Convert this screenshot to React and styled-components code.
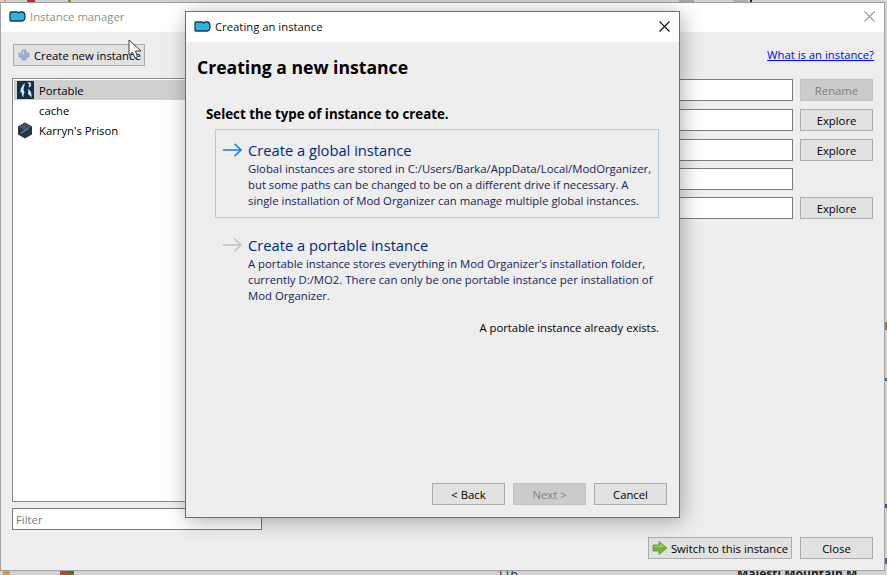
import React from 'react'
import styled, { createGlobalStyle } from 'styled-components'

const uiFont = `"Open Sans", "Noto Sans", "Liberation Sans", sans-serif`

const GlobalStyle = createGlobalStyle`
    html, body {
        margin: 0;
        padding: 0;
        background: #d2d2d2;
    }
    body {
        font-family: ${uiFont};
        font-size: 11.3px;
        color: #000;
    }
`

const LogoIcon = () => (
    <svg width="17" height="11" viewBox="0 0 17 11">
        <path d="M1 2 q0-1 1-1 h6 l1.500 1 l1.500-1 h2 q3 0 3 4.500 t-3 4.500 H2 q-1 0-1-1 Z" fill="#2db2e8" stroke="#17384c" strokeWidth="1.300" />
    </svg>
)

const PlusIcon = () => (
    <svg width="12" height="12" viewBox="0 0 12 12">
        <path d="M4 1 h4 v3 h3 v4 h-3 v3 h-4 v-3 h-3 v-4 h3 Z" fill="#93b3d3" stroke="#7f9dbd" strokeWidth="0.700" />
        <path d="M5 2 h1 v3 h-3 v1 h-1 v-1.500 h3 Z" fill="#c8dced" />
    </svg>
)

const SkyrimIcon = () => (
    <svg width="17" height="18" viewBox="0 0 17 18">
        <rect width="17" height="18" fill="#12304e" />
        <path d="M8 2 q-5 4 -4.500 10 q1 -1 1.500 -0.500 q-1 2.500 1.500 5 q-0.500 -3 1 -5 l-1 -3 Z" fill="#dfe8ef" />
        <path d="M10 2 q2 -1.500 4 0 q0.500 3 -1.500 4.500 l-1 -1 l1 -2.500 Z" fill="#dfe8ef" />
        <path d="M11 8 q4 2 3.500 8.500 q-1.500 -2.500 -3.500 -3.500 q0.500 -2.500 0 -5 Z" fill="#dfe8ef" />
    </svg>
)

const PrisonIcon = () => (
    <svg width="16" height="17" viewBox="0 0 16 17">
        <path d="M8 0.500 L15 4.500 V12.500 L8 16.500 L1 12.500 V4.500 Z" fill="#2b3540" />
        <path d="M8 0.500 L15 4.500 L8 8.500 L1 4.500 Z" fill="#48535f" />
        <path d="M4 11 L11.500 6.500" stroke="#3d8fe0" strokeWidth="1.300" />
    </svg>
)

const SwitchIcon = () => (
    <svg width="16" height="14" viewBox="0 0 16 14">
        <path d="M1 4 h6 v-3.500 l8 6.500 l-8 6.500 v-3.500 h-6 Z" fill="#77b13c" stroke="#5d9a2c" strokeWidth="0.800" />
        <path d="M2 5 h6 v-2.500 l4 3.500 h-10 Z" fill="#a5d26b" />
    </svg>
)

const LinkArrow = ({ color }) => (
    <svg width="19" height="14" viewBox="0 0 19 14" fill="none" stroke={color} strokeWidth="1.600">
        <path d="M0 7 H18" />
        <path d="M11.500 0.800 L18 7 L11.500 13.200" />
    </svg>
)

const CloseGlyph = ({ color }) => (
    <svg width="11" height="11" viewBox="0 0 11 11" fill="none" stroke={color} strokeWidth="1.100">
        <path d="M0.500 0.500 L10.500 10.500 M10.500 0.500 L0.500 10.500" />
    </svg>
)

const Pointer = () => (
    <svg width="15" height="20" viewBox="0 0 15 20">
        <path d="M1 1 V16 L4.500 13 L7 19 L9.500 18 L7.500 12 H13 Z" fill="#fff" stroke="#2a2a2a" strokeWidth="0.900" />
    </svg>
)

const Screen = styled.div`
    position: relative;
    width: 887px;
    height: 575px;
    overflow: hidden;
    background: #d2d2d2;
`

/* the app behind the windows only shows through at the screen edges */
const Speck = styled.i`
    position: absolute;
    left: ${p => p.$x}px;
    top: ${p => p.$y}px;
    width: ${p => p.$w}px;
    height: ${p => p.$h}px;
    background: ${p => p.$c};
`

const PeekText = styled.span`
    position: absolute;
    left: ${p => p.$x}px;
    top: 567px;
    font-size: 12px;
    line-height: 14px;
    font-weight: ${p => (p.$bold ? 700 : 400)};
    white-space: nowrap;
    color: #222;
`

const Manager = styled.div`
    position: absolute;
    left: 0;
    top: 2px;
    width: 885px;
    height: 569px;
    box-sizing: border-box;
    display: flex;
    flex-direction: column;
    background: #eee;
    border: 1px solid #a3a3a3;
    border-top-color: #9c9c9c;
`

const TitleBar = styled.div`
    flex: none;
    box-sizing: border-box;
    height: ${p => p.$height}px;
    display: flex;
    align-items: center;
    gap: 4px;
    padding: 0 9px ${p => p.$lift}px 8px;
    background: #fff;
`

const TitleText = styled.span`
    flex: 1;
    color: ${p => (p.$dim ? '#8f8f8f' : '#111')};
`

const ManagerBody = styled.div`
    flex: 1;
    display: flex;
    flex-direction: column;
    min-height: 0;
    padding: 12px 11px 11px;
`

const Columns = styled.div`
    flex: 1;
    display: flex;
    gap: 20px;
    min-height: 0;
`

const LeftColumn = styled.div`
    flex: none;
    width: 250px;
    display: flex;
    flex-direction: column;
`

const RightColumn = styled.div`
    flex: 1;
    display: flex;
    flex-direction: column;
`

const Button = styled.button`
    flex: none;
    box-sizing: border-box;
    display: inline-flex;
    align-items: center;
    justify-content: center;
    gap: 3px;
    width: ${p => p.$width}px;
    height: 22px;
    padding: 0;
    font-family: ${uiFont};
    font-size: 11.3px;
    white-space: nowrap;
    color: ${p => (p.disabled ? '#808080' : '#000')};
    background: ${p => (p.disabled ? '#cbcbcb' : '#e1e1e1')};
    border: 1px solid ${p => (p.disabled ? '#c2c2c2' : '#adadad')};
`

const CreateButton = styled(Button)`
    justify-content: flex-start;
    margin-left: 1px;
    padding-left: 4px;
    gap: 4px;
`

const InstanceList = styled.ul`
    flex: 1;
    margin: 12px 0 6px;
    padding: 1px;
    list-style: none;
    background: #fff;
    border: 1px solid #828790;
`

const InstanceRow = styled.li`
    height: 20px;
    display: flex;
    align-items: center;
    background: ${p => (p.$selected ? '#d0d0d0' : 'transparent')};
`

const RowIcon = styled.span`
    flex: none;
    box-sizing: border-box;
    width: 25px;
    padding-left: 3px;
    display: flex;
`

const Field = styled.input`
    flex: 1;
    min-width: 0;
    box-sizing: border-box;
    height: 22px;
    padding: 0 3px;
    font-family: ${uiFont};
    font-size: 11.3px;
    background: #fff;
    border: 1px solid #7a7a7a;
    border-radius: 0;
    outline: none;
    &::placeholder {
        color: #7d7d7d;
    }
`

const FilterField = styled(Field)`
    flex: none;
    width: 100%;
`

const HelpLink = styled.a`
    align-self: flex-end;
    height: 22px;
    line-height: 22px;
    margin: 0 -1px 13px 0;
    color: #0000ff;
    text-decoration: underline;
`

const FormRow = styled.div`
    display: flex;
    gap: 7px;
    margin-bottom: ${p => p.$gap}px;
`

const ButtonGap = styled.div`
    flex: none;
    width: 73px;
`

const Footer = styled.div`
    flex: none;
    display: flex;
    justify-content: flex-end;
    gap: ${p => p.$gap}px;
    margin-top: ${p => p.$top}px;
`

const Dialog = styled.div`
    position: absolute;
    left: 185px;
    top: 11px;
    width: 495px;
    height: 507px;
    box-sizing: border-box;
    display: flex;
    flex-direction: column;
    background: #eee;
    border: 1px solid #6e6e6e;
    box-shadow: 2px 3px 20px rgba(0, 0, 0, 0.32);
`

const DialogBody = styled.div`
    flex: 1;
    display: flex;
    flex-direction: column;
    min-height: 0;
    padding: 12px 12px 12px 11px;
`

const Heading = styled.h1`
    margin: 0;
    font-size: 17.600px;
    line-height: 26px;
    font-weight: 700;
`

const SubHeading = styled.h2`
    margin: 25px 0 6px 9px;
    font-size: 13.300px;
    line-height: 18px;
    font-weight: 700;
`

const CommandLink = styled.div`
    box-sizing: border-box;
    margin: ${p => p.$top}px 8px 0 18px;
    height: ${p => p.$height}px;
    padding: ${p => p.$pad}px 8px 0 7px;
    display: grid;
    grid-template-columns: 25px 1fr;
    grid-template-rows: 22px auto;
    border: 1px solid ${p => (p.$active ? '#a9cde8' : 'transparent')};
`

const ArrowSlot = styled.span`
    display: flex;
    align-items: center;
    height: 22px;
`

const CommandTitle = styled.div`
    font-size: 14.700px;
    line-height: 22px;
    color: #002a7f;
`

const CommandText = styled.div`
    grid-column: 2;
    font-size: 11.330px;
    line-height: 16px;
    color: #14245a;
    white-space: nowrap;
`

const Notice = styled.div`
    margin: 7px 8px 0 0;
    text-align: right;
    line-height: 16px;
`

const Spacer = styled.div`
    flex: 1;
`

const PointerSlot = styled.div`
    position: absolute;
    left: 128px;
    top: 39px;
    line-height: 0;
`

const App = () => (
    <Screen>
        <GlobalStyle />

        <Speck $x={4} $y={0} $w={2} $h={2} $c="#e8a23c" />
        <Speck $x={27} $y={0} $w={8} $h={2} $c="#c2244c" />
        <Speck $x={68} $y={0} $w={3} $h={2} $c="#7a9a20" />
        <Speck $x={679} $y={0} $w={15} $h={2} $c="#a8a8a8" />
        <Speck $x={733} $y={0} $w={15} $h={2} $c="#b0b0b0" />
        <Speck $x={750} $y={0} $w={2} $h={2} $c="#222" />
        <Speck $x={3} $y={571} $w={7} $h={4} $c="#e09a30" />
        <Speck $x={60} $y={571} $w={14} $h={4} $c="#b8442a" />
        <Speck $x={68} $y={571} $w={5} $h={3} $c="#2c7a1c" />
        <Speck $x={885} $y={322} $w={2} $h={8} $c="#a87838" />
        <Speck $x={885} $y={378} $w={2} $h={3} $c="#2a6ea8" />
        <Speck $x={885} $y={504} $w={2} $h={4} $c="#34506a" />
        <Speck $x={885} $y={558} $w={2} $h={6} $c="#2a6ea8" />
        <PeekText $x={497}>116</PeekText>
        <PeekText $x={737} $bold>Majesti Mountain M</PeekText>

        <Manager>
            <TitleBar $height={29} $lift={2}>
                <LogoIcon />
                <TitleText $dim>Instance manager</TitleText>
                <CloseGlyph color="#9a9a9a" />
            </TitleBar>
            <ManagerBody>
                <Columns>
                    <LeftColumn>
                        <CreateButton $width={132}>
                            <PlusIcon />
                            Create new instance
                        </CreateButton>
                        <InstanceList>
                            <InstanceRow $selected>
                                <RowIcon><SkyrimIcon /></RowIcon>
                                Portable
                            </InstanceRow>
                            <InstanceRow>
                                <RowIcon />
                                cache
                            </InstanceRow>
                            <InstanceRow>
                                <RowIcon><PrisonIcon /></RowIcon>
                                Karryn's Prison
                            </InstanceRow>
                        </InstanceList>
                        <FilterField placeholder="Filter" />
                    </LeftColumn>
                    <RightColumn>
                        <HelpLink>What is an instance?</HelpLink>
                        <FormRow $gap={8}>
                            <Field readOnly />
                            <Button $width={73} disabled>Rename</Button>
                        </FormRow>
                        <FormRow $gap={8}>
                            <Field readOnly />
                            <Button $width={73}>Explore</Button>
                        </FormRow>
                        <FormRow $gap={7}>
                            <Field readOnly />
                            <Button $width={73}>Explore</Button>
                        </FormRow>
                        <FormRow $gap={7}>
                            <Field readOnly />
                            <ButtonGap />
                        </FormRow>
                        <FormRow $gap={0}>
                            <Field readOnly />
                            <Button $width={73}>Explore</Button>
                        </FormRow>
                    </RightColumn>
                </Columns>
                <Footer $gap={8} $top={7}>
                    <Button $width={144}>
                        <SwitchIcon />
                        Switch to this instance
                    </Button>
                    <Button $width={73}>Close</Button>
                </Footer>
            </ManagerBody>
        </Manager>

        <Dialog>
            <TitleBar $height={30} $lift={1}>
                <LogoIcon />
                <TitleText>Creating an instance</TitleText>
                <CloseGlyph color="#111" />
            </TitleBar>
            <DialogBody>
                <Heading>Creating a new instance</Heading>
                <SubHeading>Select the type of instance to create.</SubHeading>
                <CommandLink $active $top={0} $height={89} $pad={9}>
                    <ArrowSlot><LinkArrow color="#1d86dc" /></ArrowSlot>
                    <CommandTitle>Create a global instance</CommandTitle>
                    <CommandText>
                        Global instances are stored in C:/Users/Barka/AppData/Local/ModOrganizer,<br />
                        but some paths can be changed to be on a different drive if necessary. A<br />
                        single installation of Mod Organizer can manage multiple global instances.
                    </CommandText>
                </CommandLink>
                <CommandLink $top={5} $height={90} $pad={10}>
                    <ArrowSlot><LinkArrow color="#c4c4c4" /></ArrowSlot>
                    <CommandTitle>Create a portable instance</CommandTitle>
                    <CommandText>
                        A portable instance stores everything in Mod Organizer's installation folder,<br />
                        currently D:/MO2. There can only be one portable instance per installation of<br />
                        Mod Organizer.
                    </CommandText>
                </CommandLink>
                <Notice>A portable instance already exists.</Notice>
                <Spacer />
                <Footer $gap={8} $top={0}>
                    <Button $width={73}>&lt; Back</Button>
                    <Button $width={73} disabled>Next &gt;</Button>
                    <Button $width={73}>Cancel</Button>
                </Footer>
            </DialogBody>
        </Dialog>

        <PointerSlot><Pointer /></PointerSlot>
    </Screen>
)

export default App
